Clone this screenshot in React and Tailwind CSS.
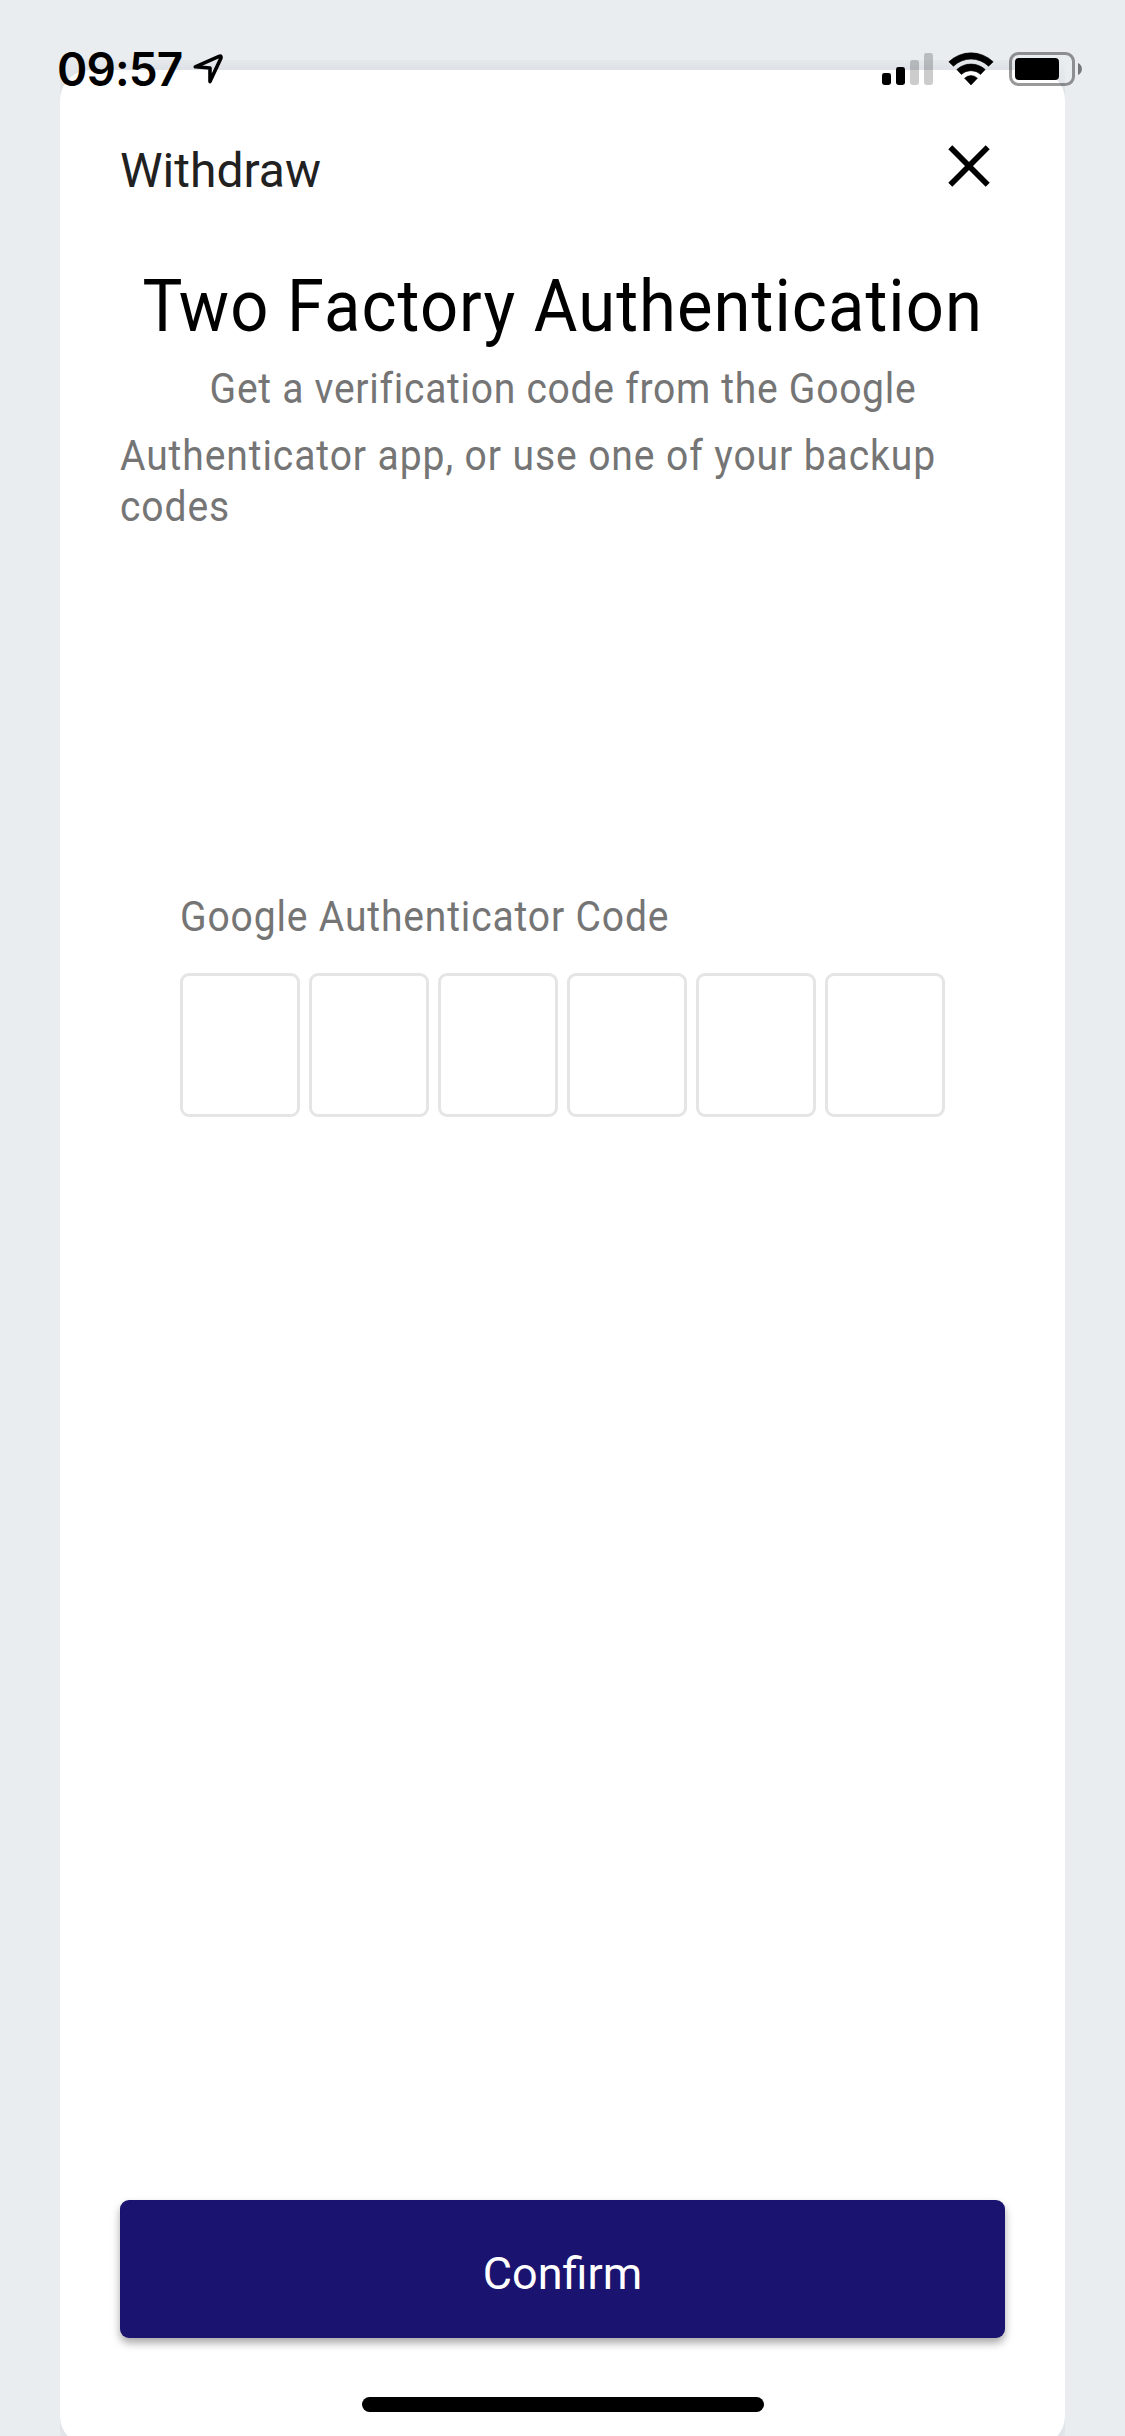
const cells = [0, 1, 2, 3, 4, 5];

function LocationArrow() {
  return (
    <svg className="ml-[10px] mt-[53px] h-[32px] w-[32px] shrink-0" viewBox="0 0 32 32" fill="none" stroke="#000" strokeWidth="3.6" strokeLinejoin="round">
      <path d="M3.3 13.8 27 3.3Q29.4 2.3 29 5L18 28.6V15Z" />
    </svg>
  );
}

function StatusIcons() {
  return (
    <svg className="ml-auto mt-[50px] h-[38px] w-[204px]" viewBox="880 50 204 38">
      <rect x="882" y="73" width="9" height="12" rx="2.4" />
      <rect x="896" y="67" width="9" height="18" rx="2.4" />
      <rect x="910" y="60" width="9" height="25" rx="2.4" opacity="0.2" />
      <rect x="924" y="53" width="9" height="32" rx="2.4" opacity="0.2" />
      <path d="M948.8 61.8a32 32 0 0 1 44.4 0L988.6 66.2a25.3 25.3 0 0 0-35.2 0ZM956.8 69.6a21 21 0 0 1 28.4 0L980.6 74.4a14.2 14.2 0 0 0-19.2 0ZM964.6 78.2a9.2 9.2 0 0 1 12.8 0L971 85Z" stroke="#000" strokeWidth="0.6" strokeLinejoin="round" />
      <rect x="1010.5" y="53.5" width="63" height="31" rx="8" fill="none" stroke="#000" strokeWidth="3" opacity="0.4" />
      <rect x="1015" y="58" width="44" height="22" rx="4" />
      <path d="M1078 63a6.6 6.6 0 0 1 0 12Z" opacity="0.5" />
    </svg>
  );
}

export default function App() {
  return (
    <div className="relative h-[2436px] w-[1125px] overflow-hidden bg-[#e9edf0] font-['Roboto',sans-serif] text-black">
      <div className="h-[60px]" />
      <div className="mx-[60px] h-[2376px] overflow-hidden">
        <main className="mt-[10px] flex h-[2376px] flex-col rounded-[30px] bg-white px-[60px] shadow-[0_0_26px_rgba(40,40,70,0.1)]">
          <header className="flex h-[176px] shrink-0 justify-between">
            <h1 className="mt-[73px] text-[48px] leading-[56px] text-[#212121]">Withdraw</h1>
            <button aria-label="Close" className="mr-[15px] mt-[75px] h-[42px] w-[42px]">
              <svg viewBox="0 0 42 42" className="h-full w-full" stroke="#000" strokeWidth="5.7"><path d="M2.3 2.3 39.7 39.7M39.7 2.3 2.3 39.7" /></svg>
            </button>
          </header>
          <h2 className="mt-[18px] flex h-[86px] shrink-0 justify-center text-[72px] leading-[86px] whitespace-nowrap">
            <span className="inline-block scale-x-93 tracking-[1.12px]"><span className="tracking-[-4px]">T</span>wo Factory Authentication</span>
          </h2>
          <p className="mt-[14px] flex h-[50px] shrink-0 justify-center text-[42px] leading-[50px] whitespace-nowrap text-[#757575]"><span className="inline-block scale-x-93 tracking-[0.76px]">Get a verification code from the Google</span></p>
          <p className="mt-[16px] shrink-0 origin-left scale-x-93 text-[42px] leading-[51px] tracking-[0.97px] whitespace-nowrap text-[#757575]">Authenticator app, or use one of your backup<br />codes</p>
          <section className="mt-[360px] px-[60px]">
            <label className="block origin-left scale-x-93 text-[42px] leading-[50px] tracking-[0.9px] whitespace-nowrap text-[#757575]">Google Authenticator Code</label>
            <div className="mt-[31px] flex gap-[9px]">
              {cells.map((c) => <div key={c} className="h-[144px] w-[120px] rounded-[9px] border-[3px] border-[#e5e5e5]" />)}
            </div>
          </section>
          <button className="mb-[108px] mt-auto h-[138px] shrink-0 rounded-[9px] bg-[#1a1370] pt-[9px] text-[45px] leading-[54px] text-white shadow-[0_5px_8px_rgba(0,0,0,0.35)]">Confirm</button>
        </main>
      </div>
      <div className="absolute inset-x-0 top-0 flex h-[132px] pl-[57px] pr-[41px]">
        <time className="mt-[41px] font-['Inter',sans-serif] text-[46px] font-semibold leading-[56px] tracking-[-0.9px]">09:57</time>
        <LocationArrow />
        <StatusIcons />
      </div>
      <div className="absolute left-[362px] top-[2397px] h-[15px] w-[402px] rounded-full bg-black" />
    </div>
  );
}
